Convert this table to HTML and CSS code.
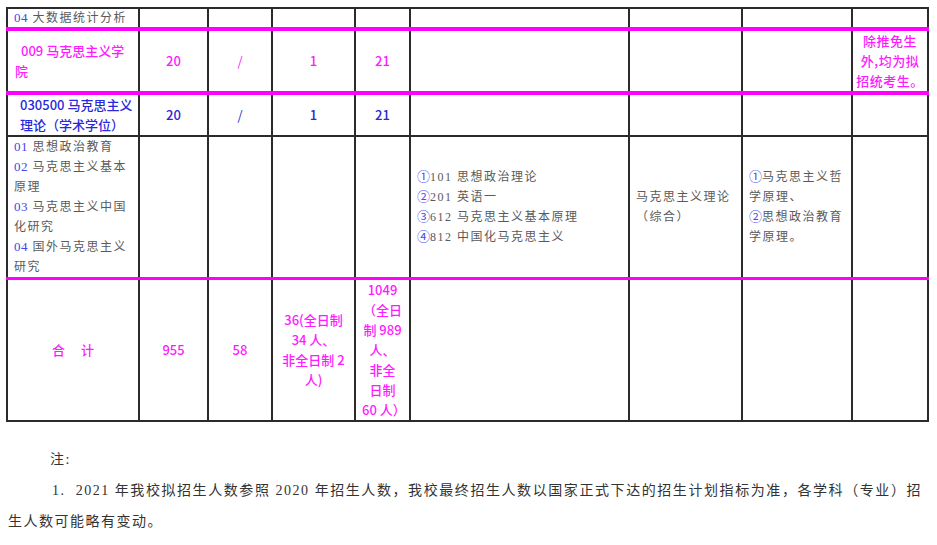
FILE: index.html
```html
<!DOCTYPE html>
<html lang="zh-CN">
<head>
<meta charset="utf-8">
<title>招生计划</title>
<link rel="stylesheet" href="styles.css">
</head>
<body>
<div class="page">
<table class="plan">
<colgroup>
<col class="w1"><col class="w2"><col class="w3"><col class="w4"><col class="w5"><col class="w6"><col class="w7"><col class="w8"><col class="w9">
</colgroup>
<tbody>
<tr class="r1">
<td class="gray left"><span class="num">04</span> 大数据统计分析</td>
<td></td><td></td><td></td><td></td><td></td><td></td><td></td><td></td>
</tr>
<tr class="r2 magtop">
<td class="mag left ind">009 马克思主义学<br>院</td>
<td class="mag">20</td>
<td class="mag slash">/</td>
<td class="mag">1</td>
<td class="mag">21</td>
<td></td><td></td><td></td>
<td class="mag note">除推免生<br>外,均为拟<br>招统考生。</td>
</tr>
<tr class="r3 magtop">
<td class="blue left pad12">030500 马克思主义<br>理论（学术学位）</td>
<td class="blue">20</td>
<td class="blue slash">/</td>
<td class="blue">1</td>
<td class="blue">21</td>
<td></td><td></td><td></td><td></td>
</tr>
<tr class="r4">
<td class="gray left top"><span class="num">01</span> 思想政治教育<br><span class="num">02</span> 马克思主义基本<br>原理<br><span class="num">03</span> 马克思主义中国<br>化研究<br><span class="num">04</span> 国外马克思主义<br>研究</td>
<td></td><td></td><td></td><td></td>
<td class="gray left"><span class="circ">①</span>101 思想政治理论<br><span class="circ">②</span>201 英语一<br><span class="circ">③</span>612 马克思主义基本原理<br><span class="circ">④</span>812 中国化马克思主义</td>
<td class="gray left">马克思主义理论<br>（综合）</td>
<td class="gray left"><span class="circ">①</span>马克思主义哲<br>学原理、<br><span class="circ">②</span>思想政治教育<br>学原理。</td>
<td></td>
</tr>
<tr class="r5 magtop thin">
<td class="mag">合　 计</td>
<td class="mag">955</td>
<td class="mag">58</td>
<td class="mag">36(全日制<br>34 人、<br>非全日制 2<br>人)</td>
<td class="mag">1049<br>（全日<br>制 989<br>人、<br>非全<br>日制<br>60 人）</td>
<td></td><td></td><td></td><td></td>
</tr>
</tbody>
</table>
<div class="notes">
<div class="note-title">注:</div>
<div class="note-line first">1.&nbsp;&nbsp;2021 年我校拟招生人数参照 2020 年招生人数，我校最终招生人数以国家正式下达的招生计划指标为准，各学科（专业）招</div>
<div class="note-line">生人数可能略有变动。</div>
</div>
</div>
</body>
</html>
```
FILE: styles.css
```css
html, body {
  margin: 0;
  padding: 0;
  background: #ffffff;
}

.page {
  padding: 7px 0 0 6px;
}

.plan {
  border-collapse: collapse;
  table-layout: fixed;
  width: 923px;
}

.w1 { width: 132px; }
.w2 { width: 69px; }
.w3 { width: 64px; }
.w4 { width: 83px; }
.w5 { width: 55px; }
.w6 { width: 219px; }
.w7 { width: 113px; }
.w8 { width: 110px; }
.w9 { width: 76px; }

.plan td {
  border: 2px solid #2b2b2b;
  padding: 0 6px;
  line-height: 20px;
  font-size: 13px;
  text-align: center;
  vertical-align: middle;
  white-space: nowrap;
  overflow: hidden;
}

.r1 td {
  line-height: 18px;
}

.magtop td {
  border-top: 4px solid #ff00ff;
}

.thin td {
  border-top: 3px solid #ff00ff;
}

.plan td.left {
  text-align: left;
}

.plan td.top {
  vertical-align: top;
}

.gray {
  font-family: "Liberation Serif", "Noto Sans CJK SC", serif;
  color: #5a5a5a;
  font-size: 12px;
  letter-spacing: 1.5px;
}

.plan td.gray {
  font-size: 12px;
}

.num {
  color: #4646e8;
  font-size: 13px;
  letter-spacing: 0.5px;
}

.circ {
  color: #4a4aee;
  font-family: "DejaVu Serif", "Liberation Serif", serif;
  font-size: 13px;
  letter-spacing: 0;
}

.mag {
  font-family: "Noto Sans CJK SC", "Liberation Sans", sans-serif;
  color: #ff1aff;
  font-weight: 500;
}

.blue {
  font-family: "Noto Sans CJK SC", "Liberation Sans", sans-serif;
  color: #2828dc;
  font-weight: 500;
}

.plan td.ind {
  padding-left: 7px;
  text-indent: 6px;
}

.plan td.pad12 {
  padding-left: 12px;
}

.slash {
  font-weight: 400;
}

.plan td.note {
  padding: 0 2px;
  letter-spacing: 0.5px;
}

.notes {
  margin-top: 22px;
  width: 914px;
  padding-left: 2px;
  font-family: "Liberation Serif", "Noto Sans CJK SC", serif;
  font-size: 14px;
  line-height: 31px;
  color: #333333;
  letter-spacing: 1.5px;
}

.note-title {
  padding-left: 42px;
}

.note-line.first {
  margin-left: 44px;
  text-align: justify;
  text-align-last: justify;
  white-space: nowrap;
}
```
